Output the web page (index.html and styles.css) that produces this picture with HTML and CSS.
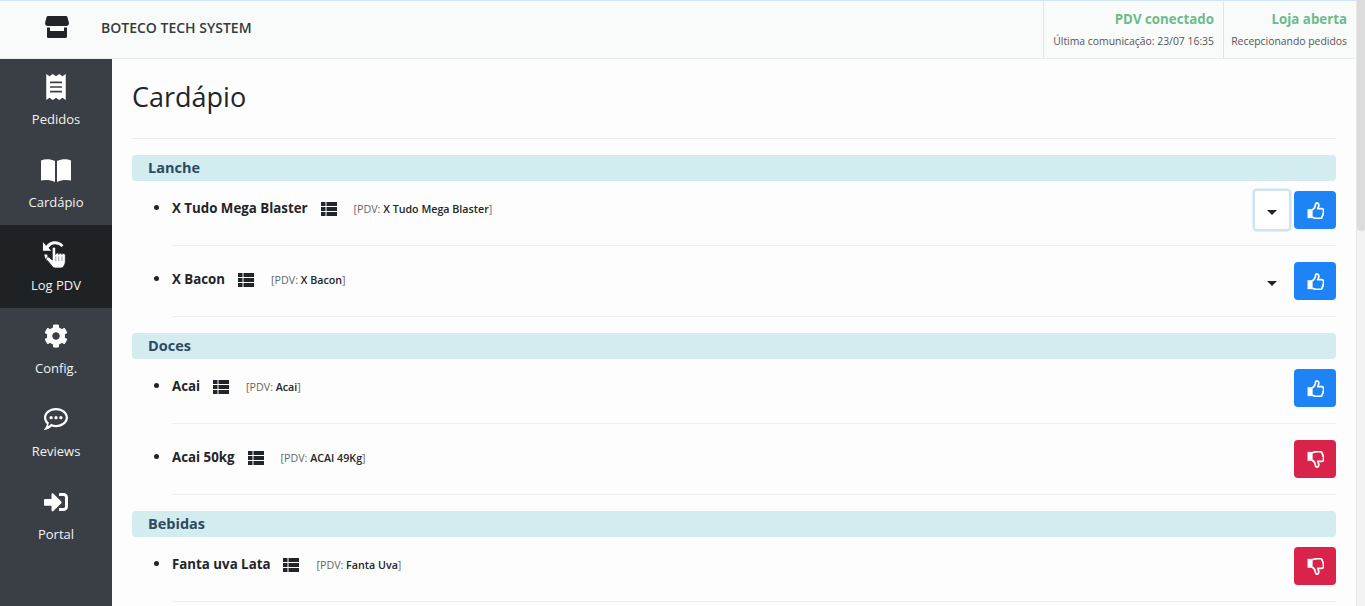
FILE: index.html
```html
<!DOCTYPE html>
<html lang="pt-BR">
<head>
<meta charset="utf-8">
<title>Cardápio</title>
<link rel="stylesheet" href="styles.css">
</head>
<body>
<div class="app">
  <div class="page">
    <header class="topbar">
      <div class="brand">
        <svg class="brand-icon" viewBox="0 0 24 22"><path d="M3 0h18a1.500 1.500 0 0 1 1.400 1l1.600 6a3 3 0 0 1-3 3H2.900A3 3 0 0 1 0 7l1.600-6A1.500 1.500 0 0 1 3 0zM2 11.500h3V15h14v-3.500h3V20.500A1.500 1.500 0 0 1 20.500 22h-17A1.500 1.500 0 0 1 2 20.500z"/></svg>
        <span class="brand-name">BOTECO TECH SYSTEM</span>
      </div>
      <div class="status status-pdv">
        <strong>PDV conectado</strong>
        <small>Última comunicação: 23/07 16:35</small>
      </div>
      <div class="status status-shop">
        <strong>Loja aberta</strong>
        <small>Recepcionando pedidos</small>
      </div>
    </header>
    <div class="body-row">
      <nav class="sidebar">
        <a class="nav-item">
          <svg class="nav-icon" viewBox="0 0 18 24"><path fill-rule="evenodd" d="M0 0l3 2 3-2 3 2 3-2 3 2 3-2v24l-3-2-3 2-3-2-3 2-3-2-3 2zM3.500 7v1.500h11V7zM3.500 11.200v1.500h11v-1.500zM3.500 15.500V17h11v-1.500z"/></svg>
          <span>Pedidos</span>
        </a>
        <a class="nav-item">
          <svg class="nav-icon nav-book" viewBox="0 0 30 24"><path d="M0 2.500C4 .6 9 .6 14 3v21C9 21.600 4 21.600 0 22.500zM30 2.500C26 .6 21 .6 16 3v21c5-2.400 10-2.400 14-1.500z"/></svg>
          <span>Cardápio</span>
        </a>
        <a class="nav-item active">
          <svg class="nav-icon nav-log" viewBox="0 0 30 30">
            <path d="M1 2v9h9L7 8a9 9 0 0 1 14-1l2-2A12 12 0 0 0 4.500 5.500z"/>
            <path d="M2.500 15h3c.3 2 1 3.500 2 5l-2 2c-1.600-2-2.700-4.500-3-7z"/>
            <path stroke="#1e2225" stroke-width=".8" d="M11 9c0-2.400 3.600-2.400 3.600 0v6c0-2 3.400-2 3.400 0 0-1.800 3.400-1.800 3.400 0 0-1.500 3.600-1.500 3.600.6V22c0 3.800-2.200 7.500-4.800 7.500h-6c-2.200 0-3.400-2-4.600-3.500l-4.600-5.500c-1.300-2.300 1.800-3.800 3.400-1.800L11 21z"/>
            <path stroke="#8a9097" stroke-width="1" d="M14.800 17v5M18 17v5M21.400 17v5"/>
          </svg>
          <span>Log PDV</span>
        </a>
        <a class="nav-item">
          <svg class="nav-icon" viewBox="0 0 512 512"><path d="M487.400 315.700l-42.600-24.600c4.300-23.200 4.300-47 0-70.200l42.600-24.600c4.900-2.800 7.100-8.600 5.500-14-11.100-35.600-30-67.800-54.700-94.600-3.800-4.100-10-5.100-14.800-2.300L380.800 110c-17.900-15.400-38.500-27.300-60.800-35.100V25.800c0-5.600-3.900-10.500-9.400-11.700-36.700-8.200-74.300-7.800-109.200 0-5.500 1.200-9.400 6.100-9.400 11.700V75c-22.200 7.900-42.800 19.800-60.800 35.100L88.700 85.500c-4.900-2.800-11-1.900-14.800 2.300-24.700 26.700-43.600 58.900-54.700 94.600-1.700 5.400.6 11.200 5.500 14L67.300 221c-4.300 23.200-4.300 47 0 70.200l-42.600 24.600c-4.900 2.800-7.100 8.600-5.500 14 11.100 35.600 30 67.800 54.700 94.600 3.800 4.100 10 5.100 14.800 2.300l42.600-24.600c17.900 15.400 38.500 27.300 60.800 35.100v49.200c0 5.600 3.900 10.500 9.400 11.700 36.700 8.200 74.300 7.800 109.200 0 5.500-1.200 9.400-6.100 9.400-11.700v-49.200c22.200-7.900 42.800-19.800 60.800-35.100l42.600 24.600c4.900 2.800 11 1.900 14.800-2.300 24.700-26.700 43.600-58.900 54.700-94.600 1.500-5.500-.7-11.300-5.600-14.100zM256 336c-44.100 0-80-35.900-80-80s35.900-80 80-80 80 35.900 80 80-35.900 80-80 80z"/></svg>
          <span>Config.</span>
        </a>
        <a class="nav-item">
          <svg class="nav-icon" viewBox="0 0 26 24"><path fill-rule="evenodd" d="M13 0c7.200 0 13 4.700 13 10.500S20.200 21 13 21c-1.700 0-3.400-.3-4.900-.8C6.500 22 3.700 23.800.5 24c-.4 0-.6-.5-.3-.8 1.500-1.700 2.500-3.700 3-5.600C1.200 15.700 0 13.200 0 10.500 0 4.700 5.800 0 13 0zm0 2.400c-5.900 0-10.600 3.600-10.600 8.100 0 2.200 1.100 4 2.900 5.500-.3 1.500-.8 2.700-1.500 3.900 1.700-.6 3-1.600 4-2.800 1.700.8 3.500 1.300 5.200 1.300 5.900 0 10.600-3.600 10.600-8s-4.700-8-10.600-8zM7.700 8.800a1.800 1.800 0 1 1 0 3.600 1.800 1.800 0 0 1 0-3.600zm5.300 0a1.800 1.800 0 1 1 0 3.600 1.800 1.800 0 0 1 0-3.600zm5.300 0a1.800 1.800 0 1 1 0 3.600 1.800 1.800 0 0 1 0-3.600z"/></svg>
          <span>Reviews</span>
        </a>
        <a class="nav-item">
          <svg class="nav-icon" viewBox="0 0 512 512"><path d="M416 448h-84c-6.600 0-12-5.400-12-12v-40c0-6.600 5.400-12 12-12h84c17.700 0 32-14.300 32-32V160c0-17.700-14.300-32-32-32h-84c-6.600 0-12-5.400-12-12V76c0-6.600 5.400-12 12-12h84c53 0 96 43 96 96v192c0 53-43 96-96 96zm-47-201L201 79c-15-15-41-4.500-41 17v96H24c-13.300 0-24 10.700-24 24v96c0 13.300 10.700 24 24 24h136v96c0 21.500 26 32 41 17l168-168c9.300-9.400 9.300-24.600 0-34z"/></svg>
          <span>Portal</span>
        </a>
      </nav>
      <main class="content">
        <h1 class="title">Cardápio</h1>
        <hr class="rule">

        <section class="group">
          <h2 class="group-title">Lanche</h2>
          <ul class="items">
            <li class="item">
              <div class="item-row">
                <div class="item-text"><b>X Tudo Mega Blaster</b><svg class="list-icon" viewBox="0 0 16 14"><use href="#th"/></svg><small>[PDV: <b>X Tudo Mega Blaster</b>]</small></div>
                <button class="caret-btn focused"><i class="caret"></i></button>
                <button class="action up"><svg viewBox="0 0 16 16"><use href="#up"/></svg></button>
              </div>
            </li>
            <li class="item">
              <div class="item-row">
                <div class="item-text"><b>X Bacon</b><svg class="list-icon" viewBox="0 0 16 14"><use href="#th"/></svg><small>[PDV: <b>X Bacon</b>]</small></div>
                <button class="caret-btn"><i class="caret"></i></button>
                <button class="action up"><svg viewBox="0 0 16 16"><use href="#up"/></svg></button>
              </div>
            </li>
          </ul>
        </section>

        <section class="group">
          <h2 class="group-title">Doces</h2>
          <ul class="items">
            <li class="item">
              <div class="item-row">
                <div class="item-text"><b>Acai</b><svg class="list-icon" viewBox="0 0 16 14"><use href="#th"/></svg><small>[PDV: <b>Acai</b>]</small></div>
                <button class="action up"><svg viewBox="0 0 16 16"><use href="#up"/></svg></button>
              </div>
            </li>
            <li class="item">
              <div class="item-row">
                <div class="item-text"><b>Acai 50kg</b><svg class="list-icon" viewBox="0 0 16 14"><use href="#th"/></svg><small>[PDV: <b>ACAI 49Kg</b>]</small></div>
                <button class="action down"><svg viewBox="0 0 16 16"><use href="#down"/></svg></button>
              </div>
            </li>
          </ul>
        </section>

        <section class="group">
          <h2 class="group-title">Bebidas</h2>
          <ul class="items">
            <li class="item">
              <div class="item-row">
                <div class="item-text"><b>Fanta uva Lata</b><svg class="list-icon" viewBox="0 0 16 14"><use href="#th"/></svg><small>[PDV: <b>Fanta Uva</b>]</small></div>
                <button class="action down"><svg viewBox="0 0 16 16"><use href="#down"/></svg></button>
              </div>
            </li>
          </ul>
        </section>
      </main>
    </div>
  </div>
  <div class="scrollbar"><div class="thumb"></div></div>
</div>
<svg class="defs" width="0" height="0">
  <defs>
    <g id="th"><path d="M0 0h4.500v4H0zM5.500 0H16v4H5.500zM0 5h4.500v4H0zM5.500 5H16v4H5.500zM0 10h4.500v4H0zM5.500 10H16v4H5.500z"/></g>
    <g id="up"><path fill="currentColor" d="M.5 6.800h4v8.400h-4z"/><path fill="none" stroke="currentColor" stroke-width="1.600" stroke-linejoin="round" d="M4.500 7.400c1.600-.4 3-2.500 3.300-4.200.2-1.400.5-2.400 1.500-2.400 1.500 0 2 1.600 1.700 3-.2.900-.6 1.600-.9 2.400h3.500c1.800 0 2.300 1.300 1.800 2.400.5 1 .3 1.900-.4 2.500.3 1 0 1.800-.7 2.200.1 1.300-.8 2.200-2.200 2.200H9.500c-2 0-3.500-1-5-1.200z"/></g>
    <g id="down"><path fill="currentColor" d="M.5.800h4v8.400h-4z"/><path fill="none" stroke="currentColor" stroke-width="1.600" stroke-linejoin="round" d="M4.500 8.600c1.600.4 3 2.500 3.300 4.200.2 1.400.5 2.400 1.500 2.400 1.500 0 2-1.600 1.700-3-.2-.9-.6-1.600-.9-2.400h3.500c1.800 0 2.300-1.300 1.800-2.400.5-1 .3-1.900-.4-2.500.3-1 0-1.800-.7-2.200.1-1.300-.8-2.200-2.200-2.200H9.500c-2 0-3.500 1-5 1.200z"/></g>
  </defs>
</svg>
</body>
</html>
```
FILE: styles.css
```css
* { box-sizing: border-box; }
html, body { margin: 0; height: 100%; overflow: hidden; }
body { font-family: "Open Sans", "Noto Sans", sans-serif; color: #212529; background: #fdfdfd; }
.defs { position: absolute; }
.app { display: flex; height: 606px; }
.page { flex: 1; min-width: 0; display: flex; flex-direction: column; }
.scrollbar { width: 9px; background: #f3f3f3; border-left: 1px solid #e8e8e8; flex: none; }
.thumb { height: 231px; background: #dcdcdc; border-radius: 0 0 3px 3px; }

.topbar { height: 59px; flex: none; display: flex; align-items: stretch; background: #f9fafa; border-top: 1px solid #cfe4f5; border-bottom: 1px solid #e9ebec; }
.brand { flex: 1; display: flex; align-items: center; padding-left: 45px; }
.brand-icon { width: 24px; height: 22px; fill: #212529; margin-right: 32px; margin-top: -5px; }
.brand-name { font-size: 14px; font-weight: 600; color: #343a40; margin-top: -4px; }
.status { display: flex; flex-direction: column; align-items: flex-end; border-left: 1px solid #e2e4e6; padding: 8px 9px 0 0; }
.status strong { font-size: 13.300px; font-weight: 700; color: #6dbb8a; line-height: 20px; }
.status small { font-size: 10.400px; color: #555; line-height: 14px; margin-top: 5px; }
.status-pdv { width: 180px; }
.status-shop { width: 133px; }

.body-row { flex: 1; display: flex; min-height: 0; }
.sidebar { width: 112px; flex: none; background: #3a3f45; display: flex; flex-direction: column; }
.nav-item { height: 83px; display: flex; flex-direction: column; align-items: center; padding-top: 15px; color: #f1f3f4; font-size: 13px; line-height: 18px; }
.nav-item.active { background: #1e2225; }
.nav-icon { width: 24px; height: 26px; fill: #fff; margin-bottom: 10px; }
.nav-book { width: 30px; }
.nav-log { width: 28px; height: 29px; margin-bottom: 7px; }

.content { flex: 1; min-width: 0; padding: 19px 20px 0; overflow: hidden; }
.title { margin: 0; font-size: 27px; font-weight: 400; line-height: 38px; color: #212529; }
.rule { margin: 22px 0 16px; border: 0; border-top: 1px solid #e9ecef; }
.group { margin-bottom: 16px; }
.group-title { margin: 0; height: 26px; padding-left: 16px; font-size: 14.500px; font-weight: 700; line-height: 26px; color: #2c4a63; background: #d3ecef; border-radius: 4px; }
.items { margin: 0; padding: 10px 0 0 40px; list-style: none; }
.item { font-size: 13.300px; }
.item + .item { padding-top: 16px; }
.item-row { display: flex; align-items: center; padding-bottom: 16px; border-bottom: 1px solid #eceeef; box-sizing: content-box; height: 38px; }
.item-text { position: relative; flex: 1; display: flex; align-items: center; margin-top: -4px; color: #212529; }
.item-text::before { content: ""; position: absolute; left: -18px; top: 50%; width: 5px; height: 5px; margin-top: -3px; border-radius: 50%; background: #212529; }
.item-text > b { font-weight: 700; }
.list-icon { width: 16px; height: 14px; margin: 2px 17px 0 13px; fill: #212529; flex: none; }
.item-text small { font-size: 10.700px; color: #666; margin-top: 2px; }
.item-text small b { color: #212529; font-weight: 600; }
.caret-btn { width: 38px; height: 38px; margin-right: 3px; background: transparent; border: 2px solid transparent; border-radius: 4px; padding: 0; display: flex; align-items: center; justify-content: center; flex: none; }
.caret-btn.focused { height: 42px; border-color: #cfe3f3; box-shadow: 0 0 0 1px #e4f0f9; background: #fff; }
.caret { display: block; width: 0; height: 0; margin-top: 5px; border-left: 5px solid transparent; border-right: 5px solid transparent; border-top: 5px solid #212529; }
.action { width: 42px; height: 38px; border: 0; border-radius: 4px; padding: 0; color: #fff; display: flex; align-items: center; justify-content: center; flex: none; }
.action svg { width: 17px; height: 17px; }
.action.up { background: #1e84f5; }
.action.down { background: #d9234a; }
```
